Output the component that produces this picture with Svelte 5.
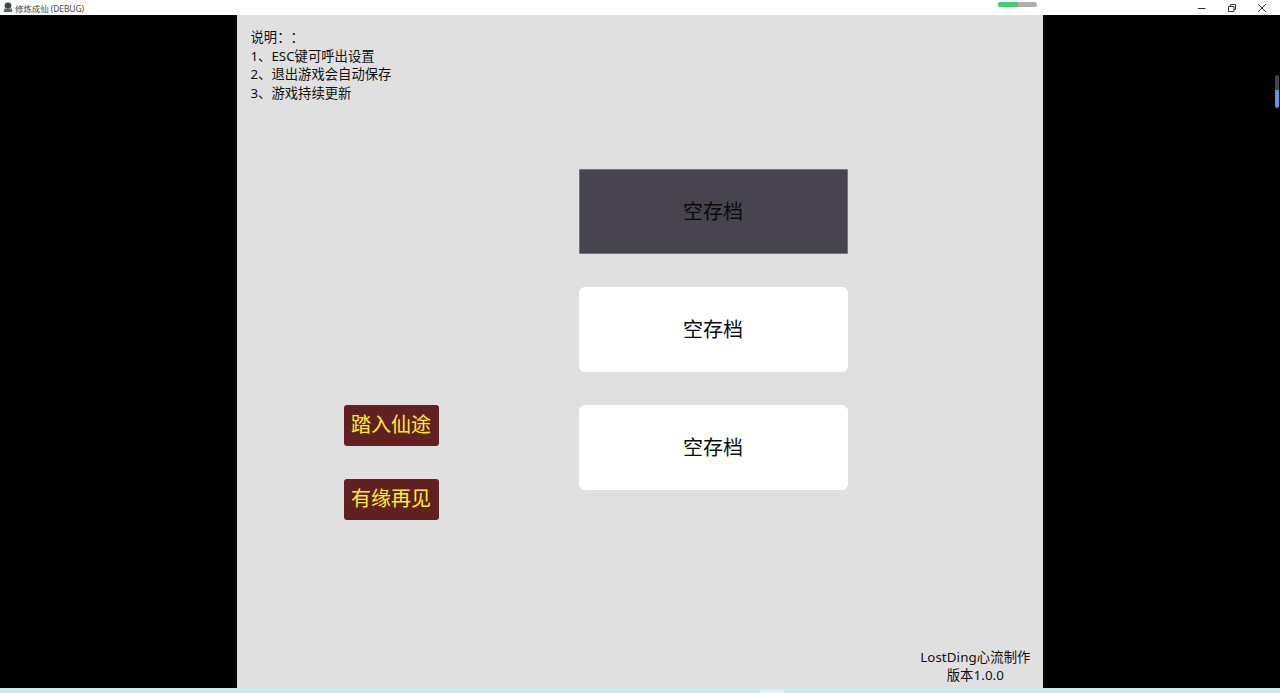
<script>
  const notes = ['1、ESC键可呼出设置', '2、退出游戏会自动保存', '3、游戏持续更新']
  const actions = ['踏入仙途', '有缘再见']
  const slots = [
    { label: '空存档', active: true },
    { label: '空存档', active: false },
    { label: '空存档', active: false }
  ]
</script>

<div class="window">
  <header class="titlebar">
    <svg class="app-icon" width="10" height="11" viewBox="0 0 10 11">
      <ellipse cx="5" cy="3.6" rx="3.4" ry="3.2" fill="#3d4a45" />
      <path d="M1.5 6.5 L8.5 6.5 L9.5 10 L0.5 10 Z" fill="#5c6a66" />
    </svg>
    <span class="title">修炼成仙 (DEBUG)</span>
    <div class="progress"><div class="progress-fill" style="width: 50%"></div></div>
    <div class="controls">
      <svg width="10" height="10" viewBox="0 0 10 10"><path d="M1 5.5H8.5" stroke="#333" fill="none" /></svg>
      <svg width="10" height="10" viewBox="0 0 10 10"><path d="M1.5 3.5H7V8.5H1.5ZM3.5 3.5V1.5H8.5V6.5H7" stroke="#333" fill="none" /></svg>
      <svg width="10" height="10" viewBox="0 0 10 10"><path d="M1 1L9 9M9 1L1 9" stroke="#333" fill="none" /></svg>
    </div>
  </header>

  <main class="stage">
    <section class="game">
      <div class="notes">
        <p>说明：：</p>
        {#each notes as note}
          <p>{note}</p>
        {/each}
      </div>

      <div class="menu">
        <div class="actions">
          {#each actions as action}
            <button class="action">{action}</button>
          {/each}
        </div>
        <div class="slots">
          {#each slots as slot}
            <button class="slot" class:active={slot.active}>{slot.label}</button>
          {/each}
        </div>
      </div>

      <footer class="credits">
        <p>LostDing心流制作</p>
        <p>版本1.0.0</p>
      </footer>
    </section>
    <div class="scroll-mark"></div>
  </main>

  <div class="strip"><span class="strip-item"></span></div>
</div>

<style>
  :global(body) { margin: 0; background: #000; }

  .window {
    height: 693px;
    display: flex;
    flex-direction: column;
    overflow: hidden;
    font-family: "Noto Sans", "Noto Sans CJK SC", sans-serif;
    text-spacing-trim: space-all;
  }

  .titlebar {
    position: relative;
    height: 15px;
    flex: none;
    display: flex;
    align-items: center;
    padding-left: 3px;
    background: #fff;
  }
  .app-icon { margin-right: 2px; }
  .title { font-size: 8.5px; color: #444; letter-spacing: -0.1px; }
  .progress {
    position: absolute;
    left: 998px;
    top: 2px;
    width: 39px;
    height: 5px;
    border-radius: 3px;
    background: #b0aeb0;
    overflow: hidden;
  }
  .progress-fill { height: 100%; background: #3fcf6c; }
  .controls {
    margin-left: auto;
    display: flex;
    gap: 20px;
    padding-right: 13px;
  }

  .stage {
    position: relative;
    flex: 1;
    min-height: 0;
    display: flex;
    justify-content: center;
    background: #000;
  }
  .scroll-mark {
    position: absolute;
    right: 1px;
    top: 60px;
    width: 4px;
    height: 33px;
    border-radius: 2px;
    background: linear-gradient(#444 0 45%, #5a96dc 45% 100%);
  }

  .game {
    width: 806px;
    margin-left: -1px;
    box-sizing: border-box;
    padding: 13px 12px 4px 14px;
    display: flex;
    flex-direction: column;
    background: #e0e0e0;
    color: #111;
  }

  p { margin: 0; }
  .notes { font-size: 13.33px; line-height: 18.6px; height: 75px; }

  .menu {
    margin-top: 66px;
    display: flex;
    align-items: flex-start;
  }
  .actions {
    margin-left: 93px;
    margin-top: 236px;
    display: flex;
    flex-direction: column;
    gap: 33px;
  }
  .action {
    width: 95px;
    height: 41px;
    padding: 0 0 4px;
    border: none;
    border-radius: 3px;
    background: #632022;
    color: #fff02a;
    font-family: inherit;
    font-size: 20px;
    cursor: pointer;
  }
  .slots {
    margin-left: 140px;
    display: flex;
    flex-direction: column;
    gap: 33px;
  }
  .slot {
    width: 269px;
    height: 85px;
    padding: 0 0 2px;
    border: none;
    border-radius: 6px;
    background: #fff;
    color: #0a0a0a;
    font-family: inherit;
    font-size: 20px;
    cursor: pointer;
  }
  .slot.active {
    border-radius: 2px;
    background: #47434f;
    box-shadow: inset 0 0 0 1px #77747c;
  }

  .credits {
    margin-top: auto;
    align-self: flex-end;
    text-align: center;
    font-size: 13.33px;
    line-height: 18px;
    letter-spacing: 0.1px;
  }

  .strip { position: relative; height: 5px; flex: none; background: #cfe9ec; }
  .strip-item {
    position: absolute;
    left: 760px;
    top: 2px;
    width: 24px;
    height: 3px;
    background: #e6f4f5;
  }
</style>
